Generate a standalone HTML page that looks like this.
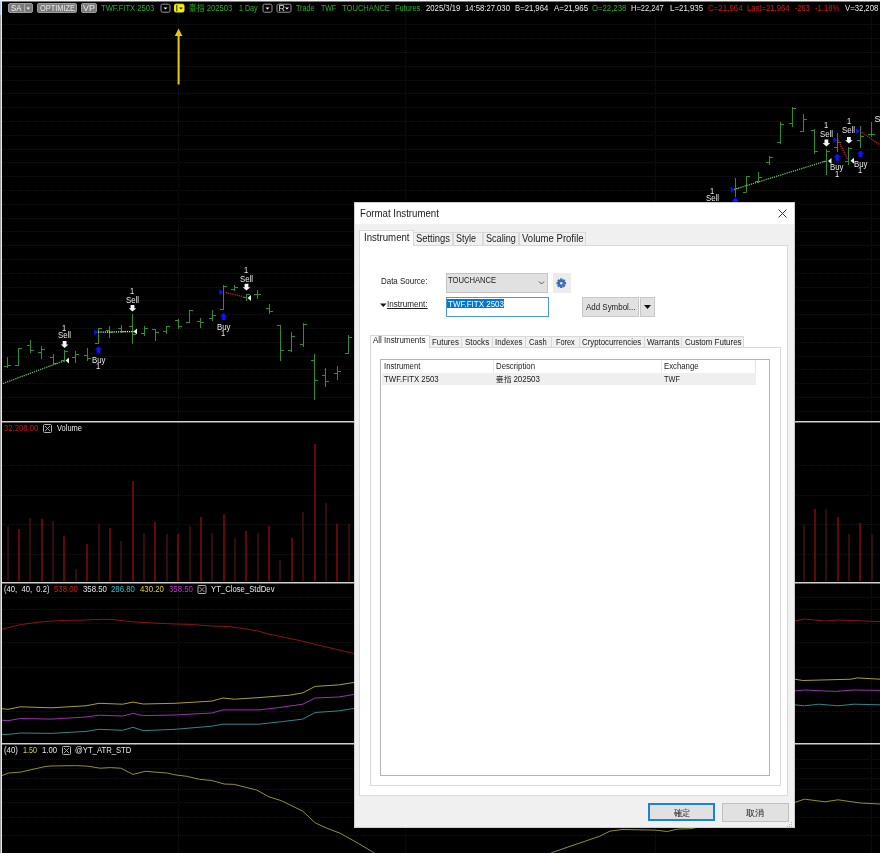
<!DOCTYPE html>
<html><head><meta charset="utf-8"><style>
html,body{margin:0;padding:0;background:#000;width:880px;height:853px;overflow:hidden}
.t{position:absolute;white-space:pre;transform-origin:0 0;font-family:'Liberation Sans', sans-serif}
#root{filter:blur(0.35px);position:relative;width:880px;height:853px;overflow:hidden;background:#000}
</style></head><body><div id="root">
<svg style="position:absolute;left:0;top:0" width="880" height="853" viewBox="0 0 880 853">
<line x1="2" y1="24.5" x2="880" y2="24.5" stroke="#131313" stroke-width="1" stroke-dasharray="1 1"/>
<line x1="2" y1="38.5" x2="880" y2="38.5" stroke="#131313" stroke-width="1" stroke-dasharray="1 1"/>
<line x1="2" y1="52.5" x2="880" y2="52.5" stroke="#131313" stroke-width="1" stroke-dasharray="1 1"/>
<line x1="2" y1="66.5" x2="880" y2="66.5" stroke="#131313" stroke-width="1" stroke-dasharray="1 1"/>
<line x1="2" y1="80.5" x2="880" y2="80.5" stroke="#131313" stroke-width="1" stroke-dasharray="1 1"/>
<line x1="2" y1="93.5" x2="880" y2="93.5" stroke="#131313" stroke-width="1" stroke-dasharray="1 1"/>
<line x1="2" y1="107.5" x2="880" y2="107.5" stroke="#131313" stroke-width="1" stroke-dasharray="1 1"/>
<line x1="2" y1="121.5" x2="880" y2="121.5" stroke="#131313" stroke-width="1" stroke-dasharray="1 1"/>
<line x1="2" y1="135.5" x2="880" y2="135.5" stroke="#131313" stroke-width="1" stroke-dasharray="1 1"/>
<line x1="2" y1="149.5" x2="880" y2="149.5" stroke="#131313" stroke-width="1" stroke-dasharray="1 1"/>
<line x1="2" y1="162.5" x2="880" y2="162.5" stroke="#131313" stroke-width="1" stroke-dasharray="1 1"/>
<line x1="2" y1="176.5" x2="880" y2="176.5" stroke="#131313" stroke-width="1" stroke-dasharray="1 1"/>
<line x1="2" y1="190.5" x2="880" y2="190.5" stroke="#131313" stroke-width="1" stroke-dasharray="1 1"/>
<line x1="2" y1="204.5" x2="880" y2="204.5" stroke="#131313" stroke-width="1" stroke-dasharray="1 1"/>
<line x1="2" y1="218.5" x2="880" y2="218.5" stroke="#131313" stroke-width="1" stroke-dasharray="1 1"/>
<line x1="2" y1="231.5" x2="880" y2="231.5" stroke="#131313" stroke-width="1" stroke-dasharray="1 1"/>
<line x1="2" y1="245.5" x2="880" y2="245.5" stroke="#131313" stroke-width="1" stroke-dasharray="1 1"/>
<line x1="2" y1="259.5" x2="880" y2="259.5" stroke="#131313" stroke-width="1" stroke-dasharray="1 1"/>
<line x1="2" y1="273.5" x2="880" y2="273.5" stroke="#131313" stroke-width="1" stroke-dasharray="1 1"/>
<line x1="2" y1="287.5" x2="880" y2="287.5" stroke="#131313" stroke-width="1" stroke-dasharray="1 1"/>
<line x1="2" y1="300.5" x2="880" y2="300.5" stroke="#131313" stroke-width="1" stroke-dasharray="1 1"/>
<line x1="2" y1="314.5" x2="880" y2="314.5" stroke="#131313" stroke-width="1" stroke-dasharray="1 1"/>
<line x1="2" y1="328.5" x2="880" y2="328.5" stroke="#131313" stroke-width="1" stroke-dasharray="1 1"/>
<line x1="2" y1="342.5" x2="880" y2="342.5" stroke="#131313" stroke-width="1" stroke-dasharray="1 1"/>
<line x1="2" y1="356.5" x2="880" y2="356.5" stroke="#131313" stroke-width="1" stroke-dasharray="1 1"/>
<line x1="2" y1="369.5" x2="880" y2="369.5" stroke="#131313" stroke-width="1" stroke-dasharray="1 1"/>
<line x1="2" y1="383.5" x2="880" y2="383.5" stroke="#131313" stroke-width="1" stroke-dasharray="1 1"/>
<line x1="2" y1="397.5" x2="880" y2="397.5" stroke="#131313" stroke-width="1" stroke-dasharray="1 1"/>
<line x1="2" y1="411.5" x2="880" y2="411.5" stroke="#131313" stroke-width="1" stroke-dasharray="1 1"/>
<line x1="2" y1="465.5" x2="880" y2="465.5" stroke="#131313" stroke-width="1" stroke-dasharray="1 1"/>
<line x1="2" y1="495.5" x2="880" y2="495.5" stroke="#131313" stroke-width="1" stroke-dasharray="1 1"/>
<line x1="2" y1="524.5" x2="880" y2="524.5" stroke="#131313" stroke-width="1" stroke-dasharray="1 1"/>
<line x1="2" y1="554.5" x2="880" y2="554.5" stroke="#131313" stroke-width="1" stroke-dasharray="1 1"/>
<line x1="2" y1="597.5" x2="880" y2="597.5" stroke="#131313" stroke-width="1" stroke-dasharray="1 1"/>
<line x1="2" y1="609.5" x2="880" y2="609.5" stroke="#131313" stroke-width="1" stroke-dasharray="1 1"/>
<line x1="2" y1="623.5" x2="880" y2="623.5" stroke="#131313" stroke-width="1" stroke-dasharray="1 1"/>
<line x1="2" y1="642.5" x2="880" y2="642.5" stroke="#131313" stroke-width="1" stroke-dasharray="1 1"/>
<line x1="2" y1="667.5" x2="880" y2="667.5" stroke="#131313" stroke-width="1" stroke-dasharray="1 1"/>
<line x1="2" y1="711.5" x2="880" y2="711.5" stroke="#131313" stroke-width="1" stroke-dasharray="1 1"/>
<line x1="2" y1="759.5" x2="880" y2="759.5" stroke="#131313" stroke-width="1" stroke-dasharray="1 1"/>
<line x1="2" y1="768.5" x2="880" y2="768.5" stroke="#131313" stroke-width="1" stroke-dasharray="1 1"/>
<line x1="2" y1="778.5" x2="880" y2="778.5" stroke="#131313" stroke-width="1" stroke-dasharray="1 1"/>
<line x1="2" y1="789.5" x2="880" y2="789.5" stroke="#131313" stroke-width="1" stroke-dasharray="1 1"/>
<line x1="2" y1="802.5" x2="880" y2="802.5" stroke="#131313" stroke-width="1" stroke-dasharray="1 1"/>
<line x1="2" y1="817.5" x2="880" y2="817.5" stroke="#131313" stroke-width="1" stroke-dasharray="1 1"/>
<line x1="2" y1="835.5" x2="880" y2="835.5" stroke="#131313" stroke-width="1" stroke-dasharray="1 1"/>
<line x1="178.5" y1="14" x2="178.5" y2="853" stroke="#131313" stroke-width="1" stroke-dasharray="1 1"/>
<line x1="405.5" y1="14" x2="405.5" y2="853" stroke="#131313" stroke-width="1" stroke-dasharray="1 1"/>
<line x1="655.5" y1="14" x2="655.5" y2="853" stroke="#131313" stroke-width="1" stroke-dasharray="1 1"/>
<line x1="871.5" y1="14" x2="871.5" y2="853" stroke="#131313" stroke-width="1" stroke-dasharray="1 1"/>
<path d="M7.5 357V368M4.0 366.5H7.5M7.5 365.5H11.0M18.5 348V366M15.0 365.5H18.5M18.5 348.5H22.0M30.5 340V353M27.0 345.5H30.5M30.5 350.5H34.0M41.5 346V359M38.0 352.5H41.5M41.5 349.5H45.0M53.5 354V364M50.0 357.5H53.5M53.5 363.5H57.0M64.5 350V362M61.0 360.5H64.5M64.5 351.5H68.0M75.5 351V363M72.0 357.5H75.5M75.5 354.5H79.0M87.5 348V361M84.0 355.5H87.5M87.5 358.5H91.0M98.5 328V344M95.0 343.5H98.5M98.5 328.5H102.0M109.5 326V338M106.0 330.5H109.5M109.5 332.5H113.0M121.5 325V333M118.0 328.5H121.5M121.5 331.5H125.0M132.5 314V344M129.0 326.5H132.5M132.5 334.5H136.0M144.5 326V336M141.0 333.5H144.5M144.5 328.5H148.0M155.5 329V341M152.0 329.5H155.5M155.5 332.5H159.0M166.5 326V334M163.0 331.5H166.5M166.5 326.5H170.0M178.5 319V329M175.0 320.5H178.5M178.5 326.5H182.0M189.5 310V323M186.0 322.5H189.5M189.5 310.5H193.0M200.5 318V328M197.0 321.5H200.5M200.5 322.5H204.0M212.5 310V321M209.0 318.5H212.5M212.5 315.5H216.0M223.5 285V310M220.0 309.5H223.5M223.5 286.5H227.0M234.5 285V291M231.0 289.5H234.5M234.5 287.5H238.0M246.5 294V301M243.0 297.5H246.5M246.5 294.5H250.0M257.5 290V299M254.0 294.5H257.5M257.5 294.5H261.0M269.5 304V314M266.0 308.5H269.5M269.5 311.5H273.0M280.5 325V361M277.0 325.5H280.5M280.5 350.5H284.0M291.5 332V352M288.0 350.5H291.5M291.5 336.5H295.0M303.5 323V347M300.0 344.5H303.5M303.5 324.5H307.0M314.5 354V400M311.0 360.5H314.5M314.5 380.5H318.0M325.5 368V387M322.0 375.5H325.5M325.5 381.5H329.0M337.5 366V380M334.0 373.5H337.5M337.5 371.5H341.0M348.5 335V354M345.0 353.5H348.5M348.5 337.5H352.0M735.5 178V197M732.0 189.5H735.5M735.5 188.5H739.0M746.5 176V192M743.0 192.5H746.5M746.5 176.5H750.0M758.5 172V183M755.0 181.5H758.5M758.5 177.5H762.0M769.5 156V165M766.0 162.5H769.5M769.5 157.5H773.0M780.5 122V144M777.0 142.5H780.5M780.5 124.5H784.0M792.5 107V127M789.0 123.5H792.5M792.5 108.5H796.0M803.5 114V132M800.0 131.5H803.5M803.5 119.5H807.0M814.5 129V154M811.0 130.5H814.5M814.5 151.5H818.0M826.5 149V175M823.0 161.5H826.5M826.5 151.5H830.0M837.5 133V152M834.0 147.5H837.5M837.5 142.5H841.0M848.5 147V165M845.0 161.5H848.5M848.5 148.5H852.0M860.5 126V148M857.0 140.5H860.5M860.5 136.5H864.0M871.5 122V137M868.0 134.5H871.5M871.5 134.5H875.0" stroke="#2c902c" stroke-width="1" fill="none"/>
<line x1="3" y1="383.5" x2="64" y2="360.8" stroke="#70c470" stroke-width="1.3" stroke-dasharray="1.2 1"/>
<line x1="96" y1="332.2" x2="134" y2="331.6" stroke="#d0f0d0" stroke-width="1.3" stroke-dasharray="1.2 1"/>
<line x1="226" y1="292.5" x2="246" y2="297.5" stroke="#d02020" stroke-width="1.3" stroke-dasharray="1.2 1"/>
<line x1="734" y1="189.5" x2="826" y2="161" stroke="#70c470" stroke-width="1.3" stroke-dasharray="1.2 1"/>
<line x1="838" y1="140" x2="848" y2="160" stroke="#d02020" stroke-width="1.3" stroke-dasharray="1.2 1"/>
<line x1="860" y1="131" x2="880" y2="145" stroke="#d02020" stroke-width="1.3" stroke-dasharray="1.2 1"/>
<path d="M65.5 360.5L69 357.5V363.5Z" fill="#f0f0f0"/>
<path d="M62.699999999999996 341H66.5V344.5H68.39999999999999L64.6 348L60.8 344.5H62.699999999999996Z" fill="#f4f4f4"/>
<path d="M98.0 332.2L94.3 329.2V335.2Z" fill="#1010ff"/>
<path d="M98.5 346.5L102.3 349.75H100.4V353H96.6V349.75H94.7Z" fill="#1010ff"/>
<path d="M133.5 331.5L137 328.5V334.5Z" fill="#f0f0f0"/>
<path d="M130.6 305H134.4V308.3H136.3L132.5 311.6L128.7 308.3H130.6Z" fill="#f4f4f4"/>
<path d="M223.1 292.2L219.4 289.2V295.2Z" fill="#1010ff"/>
<path d="M223.6 313L227.4 316.5H225.5V320H221.7V316.5H219.79999999999998Z" fill="#1010ff"/>
<path d="M247.5 298L251 295V301Z" fill="#f0f0f0"/>
<path d="M244.6 283.7H248.4V287.15H250.3L246.5 290.6L242.7 287.15H244.6Z" fill="#f4f4f4"/>
<path d="M734.5 189.5L730.8 186.5V192.5Z" fill="#1010ff"/>
<path d="M735.4 197.5L739.1999999999999 201.25H737.3V205H733.5V201.25H731.6Z" fill="#1010ff"/>
<path d="M828.0 161L831.5 158V164Z" fill="#f0f0f0"/>
<path d="M824.5 139.5H828.3V143.05H830.1999999999999L826.4 146.6L822.6 143.05H824.5Z" fill="#f4f4f4"/>
<path d="M837.0 139.9L833.3 136.9V142.9Z" fill="#1010ff"/>
<path d="M837.3 153.7L841.0999999999999 157.25H839.1999999999999V160.8H835.4V157.25H833.5Z" fill="#1010ff"/>
<path d="M850.5 160.8L854 157.8V163.8Z" fill="#f0f0f0"/>
<path d="M847.0 136.9H850.8V140.15H852.6999999999999L848.9 143.4L845.1 140.15H847.0Z" fill="#f4f4f4"/>
<path d="M859.9 131.1L856.1999999999999 128.1V134.1Z" fill="#1010ff"/>
<path d="M860.5 150.4L864.3 153.65H862.4V156.9H858.6V153.65H856.7Z" fill="#1010ff"/>
<path d="M178.6 28.5L182.4 36H179.6V84.5H177.6V36H174.8Z" fill="#e8cc00"/>
<path d="M19 529V581M42 519V581M64 536V581M87 544V581M110 528V581M133 481V581M155 522V581M178 534V581M201 517V581M224 514V581M246 531V581M269 526V581M292 538V581M315 444V581M337 524V581M815 509V581M838 517V581M860 523V581" stroke="#a00c0c" stroke-width="1.25" fill="none"/>
<path d="M8 526V581M30 518V581M53 521V581M76 569V581M99 524V581M121 541V581M144 533V581M167 534V581M190 526V581M212 533V581M235 538V581M258 533V581M280 560V581M303 512V581M326 503V581M349 524V581M804 525V581M826 509V581M849 534V581M872 534V581" stroke="#521414" stroke-width="1.25" fill="none"/>
<polyline points="0,629.7 20.5,624.6 40.9,621.9 61.4,620.5 81.8,620.1 102.3,619.3 112.5,619.5 133,621.9 153.4,623 175,624 189.3,624.4 211.8,626 230.2,626.6 256.8,630.7 269.1,634.2 301.8,641 318.2,645 360,655" stroke="#8c1414" stroke-width="1.0" fill="none" stroke-linejoin="round"/>
<polyline points="790,621.5 794.8,621 804.4,619 825.2,621 838,620 880,621.6" stroke="#8c1414" stroke-width="1.0" fill="none" stroke-linejoin="round"/>
<polyline points="0,708.5 8,709.3 20.5,706.8 51,707.8 86,705.8 99,703.3 122.7,704.2 133,702.1 143.2,704 175,703.3 211.8,701.1 223,698 234.3,699.2 258.9,697.6 289.5,695.2 302.8,692.9 315.1,686.4 338.6,684.9 360,681.5" stroke="#a8a030" stroke-width="1.0" fill="none" stroke-linejoin="round"/>
<polyline points="790,679.5 794.8,679.2 802.8,680.5 850.8,679.2 857.2,677.9 880,679.2" stroke="#a8a030" stroke-width="1.0" fill="none" stroke-linejoin="round"/>
<polyline points="0,720.1 8,720.7 20.5,718.5 51,719.1 86,717 99,715.2 122.7,716 133,713.4 143.2,715.6 175,715 211.8,713 223,709.9 258.9,709.9 277.3,707.8 302.8,704.2 315.1,698 338.6,697 360,693.5" stroke="#a030b0" stroke-width="1.0" fill="none" stroke-linejoin="round"/>
<polyline points="790,691 794.8,691 804.4,690 834.8,691.4 854,690 880,690.4" stroke="#a030b0" stroke-width="1.0" fill="none" stroke-linejoin="round"/>
<polyline points="0,734.4 8,734.4 20.5,733 51,733.4 86,731.4 99,729.3 122.7,730.3 133,727.3 143.2,730.7 175,729.3 211.8,726.2 223,724.2 258.9,724.2 281.4,721.7 302.8,719.1 315.1,712.5 338.6,710.9 360,707.5" stroke="#2a8a90" stroke-width="1.0" fill="none" stroke-linejoin="round"/>
<polyline points="790,704.8 794.8,704.8 804.4,705.8 818.8,704.2 838,705.8 854,704.2 880,704.8" stroke="#2a8a90" stroke-width="1.0" fill="none" stroke-linejoin="round"/>
<polyline points="0,776.4 8.2,773.1 20.5,772.1 45,766.6 51,766 75.7,765.6 88,766.2 100.2,768.2 110.5,767.6 120.7,768.2 133,774.4 145.2,771.3 167.7,773.1 175,774.8 187.3,776.4 199.5,779.3 211.8,780.5 224.1,784 234.3,784.4 256.8,790.1 269.1,796.9 281.4,800.7 302.8,811.2 315.1,822.8 326.4,828 340,833.2 358.4,843.4 373.7,852.6 380,858 545,858 551.7,852.6 599.8,836.2 610,831.1 622.3,829.5 655,830.1 667.3,831.5 677.5,829.1 689.8,828.7 700,827 750,815 794.8,802.4 804.4,799.2 825.2,801.8 838,799.8 860.4,803 880,804" stroke="#948e36" stroke-width="1.0" fill="none" stroke-linejoin="round"/>
<rect x="0" y="0" width="880" height="1" fill="#f4f4f4"/>
<rect x="0" y="1" width="880" height="1" fill="#7a7a7a"/>
<rect x="1" y="0" width="1" height="853" fill="#e8e8e8"/>
<rect x="0" y="1" width="1" height="14" fill="#b8cce4"/>
<rect x="0" y="15" width="1" height="838" fill="#a0a0a0"/>
<rect x="2" y="421" width="878" height="1.5" fill="#d0d0d0"/>
<rect x="2" y="582" width="878" height="1.5" fill="#d0d0d0"/>
<rect x="2" y="743" width="878" height="1.5" fill="#d0d0d0"/>
<rect x="8.5" y="3.5" width="24" height="9" rx="1.5" fill="#7c7c7c" stroke="#9a9a9a" stroke-width="1"/>
<rect x="24" y="4" width="1" height="8" fill="#a8a8a8"/>
<path d="M26.5 7.5H30L28.25 9.5Z" fill="#fff"/>
<rect x="37.5" y="3.5" width="39" height="9" rx="1.5" fill="#7c7c7c" stroke="#9a9a9a" stroke-width="1"/>
<rect x="81.5" y="3.5" width="15" height="9" rx="1.5" fill="#7c7c7c" stroke="#9a9a9a" stroke-width="1"/>
<rect x="161.0" y="4.2" width="9.0" height="8.0" rx="1.5" fill="#000" stroke="#9a9a9a" stroke-width="1"/>
<path d="M163.5 7.5H167.5L165.5 9.5Z" fill="#fff"/>
<rect x="174.5" y="4.2" width="9.5" height="7.800000000000001" rx="1.5" fill="#f4f000" stroke="#f4f000" stroke-width="1"/>
<rect x="176.2" y="5" width="1.2" height="6.5" fill="#444"/><path d="M179 7.5H183L181 9.5Z" fill="#222"/>
<rect x="263.0" y="4.2" width="9.0" height="8.0" rx="1.5" fill="#000" stroke="#9a9a9a" stroke-width="1"/>
<path d="M265.5 7.5H269.5L267.5 9.5Z" fill="#fff"/>
<rect x="277.0" y="4.2" width="14.0" height="8.0" rx="1.5" fill="#000" stroke="#9a9a9a" stroke-width="1"/>
<path d="M285 7.5H289L287 9.5Z" fill="#fff"/>
<rect x="43.5" y="424.5" width="8" height="8" rx="1" fill="#000" stroke="#b0b0b0" stroke-width="1"/>
<path d="M45 426L50 431M50 426L45 431" stroke="#c0c0c0" stroke-width="0.8"/>
<rect x="198.0" y="585.5" width="8.0" height="8" rx="1" fill="#000" stroke="#b0b0b0" stroke-width="1"/>
<path d="M199.5 587L204.5 592M204.5 587L199.5 592" stroke="#c0c0c0" stroke-width="0.8"/>
<rect x="62.5" y="746.5" width="8" height="8" rx="1" fill="#000" stroke="#b0b0b0" stroke-width="1"/>
<path d="M64 748L69 753M69 748L64 753" stroke="#c0c0c0" stroke-width="0.8"/>
</svg>

<div class="t" style="left:62.42px;top:324.00px;font-size:8.6px;line-height:8.6px;color:#e8e8e8;font-weight:normal;transform:scaleX(0.870);">1</div>
<div class="t" style="left:58.07px;top:331.00px;font-size:9px;line-height:9px;color:#e8e8e8;font-weight:normal;transform:scaleX(0.870);">Sell</div>
<div class="t" style="left:91.54px;top:356.00px;font-size:9px;line-height:9px;color:#e8e8e8;font-weight:normal;transform:scaleX(0.870);">Buy</div>
<div class="t" style="left:96.33px;top:362.00px;font-size:8.6px;line-height:8.6px;color:#e8e8e8;font-weight:normal;transform:scaleX(0.870);">1</div>
<div class="t" style="left:130.32px;top:287.00px;font-size:8.6px;line-height:8.6px;color:#e8e8e8;font-weight:normal;transform:scaleX(0.870);">1</div>
<div class="t" style="left:125.97px;top:296.00px;font-size:9px;line-height:9px;color:#e8e8e8;font-weight:normal;transform:scaleX(0.870);">Sell</div>
<div class="t" style="left:216.64px;top:323.00px;font-size:9px;line-height:9px;color:#e8e8e8;font-weight:normal;transform:scaleX(0.870);">Buy</div>
<div class="t" style="left:221.42px;top:329.00px;font-size:8.6px;line-height:8.6px;color:#e8e8e8;font-weight:normal;transform:scaleX(0.870);">1</div>
<div class="t" style="left:244.32px;top:266.00px;font-size:8.6px;line-height:8.6px;color:#e8e8e8;font-weight:normal;transform:scaleX(0.870);">1</div>
<div class="t" style="left:239.97px;top:275.00px;font-size:9px;line-height:9px;color:#e8e8e8;font-weight:normal;transform:scaleX(0.870);">Sell</div>
<div class="t" style="left:710.43px;top:187.00px;font-size:8.6px;line-height:8.6px;color:#e8e8e8;font-weight:normal;transform:scaleX(0.870);">1</div>
<div class="t" style="left:706.07px;top:194.00px;font-size:9px;line-height:9px;color:#e8e8e8;font-weight:normal;transform:scaleX(0.870);">Sell</div>
<div class="t" style="left:824.23px;top:121.00px;font-size:8.6px;line-height:8.6px;color:#e8e8e8;font-weight:normal;transform:scaleX(0.870);">1</div>
<div class="t" style="left:819.87px;top:130.00px;font-size:9px;line-height:9px;color:#e8e8e8;font-weight:normal;transform:scaleX(0.870);">Sell</div>
<div class="t" style="left:830.34px;top:163.00px;font-size:9px;line-height:9px;color:#e8e8e8;font-weight:normal;transform:scaleX(0.870);">Buy</div>
<div class="t" style="left:835.12px;top:170.00px;font-size:8.6px;line-height:8.6px;color:#e8e8e8;font-weight:normal;transform:scaleX(0.870);">1</div>
<div class="t" style="left:846.73px;top:117.00px;font-size:8.6px;line-height:8.6px;color:#e8e8e8;font-weight:normal;transform:scaleX(0.870);">1</div>
<div class="t" style="left:842.37px;top:126.00px;font-size:9px;line-height:9px;color:#e8e8e8;font-weight:normal;transform:scaleX(0.870);">Sell</div>
<div class="t" style="left:853.54px;top:160.00px;font-size:9px;line-height:9px;color:#e8e8e8;font-weight:normal;transform:scaleX(0.870);">Buy</div>
<div class="t" style="left:858.33px;top:166.00px;font-size:8.6px;line-height:8.6px;color:#e8e8e8;font-weight:normal;transform:scaleX(0.870);">1</div>
<div class="t" style="left:874.50px;top:115.00px;font-size:9px;line-height:9px;color:#e8e8e8;font-weight:normal;transform:scaleX(1.000);">S</div>
<div class="t" style="left:11.00px;top:4.00px;font-size:8.9px;line-height:8.9px;color:#f0f0f0;font-weight:normal;transform:scaleX(0.881);">SA</div>
<div class="t" style="left:39.50px;top:4.00px;font-size:8.9px;line-height:8.9px;color:#e8e8e8;font-weight:normal;transform:scaleX(0.834);">OPTIMIZE</div>
<div class="t" style="left:83.00px;top:4.00px;font-size:8.9px;line-height:8.9px;color:#e8e8e8;font-weight:normal;transform:scaleX(1.007);">VP</div>
<div class="t" style="left:101.40px;top:4.00px;font-size:8.9px;line-height:8.9px;color:#22b422;font-weight:normal;transform:scaleX(0.855);">TWF.FITX 2503</div>
<div class="t" style="left:188.60px;top:4.00px;font-size:8.9px;line-height:8.9px;color:#22b422;font-weight:normal;transform:scaleX(0.865);">臺指 202503</div>
<div class="t" style="left:238.60px;top:4.00px;font-size:8.9px;line-height:8.9px;color:#22b422;font-weight:normal;transform:scaleX(0.804);">1 Day</div>
<div class="t" style="left:278.50px;top:4.00px;font-size:8.9px;line-height:8.9px;color:#e8e8e8;font-weight:normal;transform:scaleX(1.000);">R</div>
<div class="t" style="left:296.00px;top:4.00px;font-size:8.9px;line-height:8.9px;color:#22b422;font-weight:normal;transform:scaleX(0.807);">Trade</div>
<div class="t" style="left:320.50px;top:4.00px;font-size:8.9px;line-height:8.9px;color:#22b422;font-weight:normal;transform:scaleX(0.783);">TWF</div>
<div class="t" style="left:341.80px;top:4.00px;font-size:8.9px;line-height:8.9px;color:#22b422;font-weight:normal;transform:scaleX(0.855);">TOUCHANCE</div>
<div class="t" style="left:394.80px;top:4.00px;font-size:8.9px;line-height:8.9px;color:#22b422;font-weight:normal;transform:scaleX(0.839);">Futures</div>
<div class="t" style="left:425.50px;top:4.00px;font-size:8.9px;line-height:8.9px;color:#e8e8e8;font-weight:normal;transform:scaleX(0.872);">2025/3/19</div>
<div class="t" style="left:465.00px;top:4.00px;font-size:8.9px;line-height:8.9px;color:#e8e8e8;font-weight:normal;transform:scaleX(0.867);">14:58:27.030</div>
<div class="t" style="left:515.40px;top:4.00px;font-size:8.9px;line-height:8.9px;color:#e8e8e8;font-weight:normal;transform:scaleX(0.869);">B=21,964</div>
<div class="t" style="left:553.60px;top:4.00px;font-size:8.9px;line-height:8.9px;color:#e8e8e8;font-weight:normal;transform:scaleX(0.890);">A=21,965</div>
<div class="t" style="left:592.40px;top:4.00px;font-size:8.9px;line-height:8.9px;color:#22b422;font-weight:normal;transform:scaleX(0.873);">O=22,238</div>
<div class="t" style="left:631.00px;top:4.00px;font-size:8.9px;line-height:8.9px;color:#e8e8e8;font-weight:normal;transform:scaleX(0.843);">H=22,247</div>
<div class="t" style="left:669.50px;top:4.00px;font-size:8.9px;line-height:8.9px;color:#e8e8e8;font-weight:normal;transform:scaleX(0.889);">L=21,935</div>
<div class="t" style="left:707.60px;top:4.00px;font-size:8.9px;line-height:8.9px;color:#d81818;font-weight:normal;transform:scaleX(0.894);">C=21,964</div>
<div class="t" style="left:746.90px;top:4.00px;font-size:8.9px;line-height:8.9px;color:#d81818;font-weight:normal;transform:scaleX(0.864);">Last=21,964</div>
<div class="t" style="left:794.90px;top:4.00px;font-size:8.9px;line-height:8.9px;color:#d81818;font-weight:normal;transform:scaleX(0.825);">-263</div>
<div class="t" style="left:814.50px;top:4.00px;font-size:8.9px;line-height:8.9px;color:#d81818;font-weight:normal;transform:scaleX(0.868);">-1.18%</div>
<div class="t" style="left:844.50px;top:4.00px;font-size:8.9px;line-height:8.9px;color:#e8e8e8;font-weight:normal;transform:scaleX(0.869);">V=32,208</div>
<div class="t" style="left:4.00px;top:424.00px;font-size:8.9px;line-height:8.9px;color:#c81414;font-weight:normal;transform:scaleX(0.872);">32,208.00</div>
<div class="t" style="left:57.00px;top:424.00px;font-size:8.9px;line-height:8.9px;color:#e8e8e8;font-weight:normal;transform:scaleX(0.843);">Volume</div>
<div class="t" style="left:4.00px;top:585.00px;font-size:8.9px;line-height:8.9px;color:#e8e8e8;font-weight:normal;transform:scaleX(0.861);">(40,  40,  0.2)</div>
<div class="t" style="left:54.00px;top:585.00px;font-size:8.9px;line-height:8.9px;color:#d01818;font-weight:normal;transform:scaleX(0.882);">538.00</div>
<div class="t" style="left:83.00px;top:585.00px;font-size:8.9px;line-height:8.9px;color:#e8e8e8;font-weight:normal;transform:scaleX(0.882);">358.50</div>
<div class="t" style="left:111.00px;top:585.00px;font-size:8.9px;line-height:8.9px;color:#30c0c8;font-weight:normal;transform:scaleX(0.882);">286.80</div>
<div class="t" style="left:140.00px;top:585.00px;font-size:8.9px;line-height:8.9px;color:#d8d040;font-weight:normal;transform:scaleX(0.882);">430.20</div>
<div class="t" style="left:169.00px;top:585.00px;font-size:8.9px;line-height:8.9px;color:#c030d0;font-weight:normal;transform:scaleX(0.882);">358.50</div>
<div class="t" style="left:210.80px;top:585.00px;font-size:8.9px;line-height:8.9px;color:#e8e8e8;font-weight:normal;transform:scaleX(0.870);">YT_Close_StdDev</div>
<div class="t" style="left:4.00px;top:746.00px;font-size:8.9px;line-height:8.9px;color:#e8e8e8;font-weight:normal;transform:scaleX(0.885);">(40)</div>
<div class="t" style="left:23.00px;top:746.00px;font-size:8.9px;line-height:8.9px;color:#d8d040;font-weight:normal;transform:scaleX(0.807);">1.50</div>
<div class="t" style="left:42.00px;top:746.00px;font-size:8.9px;line-height:8.9px;color:#e8e8e8;font-weight:normal;transform:scaleX(0.865);">1.00</div>
<div class="t" style="left:75.00px;top:746.00px;font-size:8.9px;line-height:8.9px;color:#e8e8e8;font-weight:normal;transform:scaleX(0.866);">@YT_ATR_STD</div>
<div style="position:absolute;left:354px;top:202px;width:441px;height:626px;background:#f0f0f0;border:1px solid #cfcfcf;box-sizing:border-box;"></div>
<div style="position:absolute;left:355px;top:203px;width:439px;height:21px;background:#ffffff;box-sizing:border-box;"></div>
<svg style="position:absolute;left:0;top:0" width="880" height="853"><path d="M778.5 209.5L786.5 217.5M786.5 209.5L778.5 217.5" stroke="#333" stroke-width="1"/></svg>
<div style="position:absolute;left:359px;top:245px;width:429px;height:551px;background:#ffffff;border:1px solid #d9d9d9;box-sizing:border-box;"></div>
<div style="position:absolute;left:413px;top:231.5px;width:40px;height:14.5px;background:#f0f0f0;border:1px solid #d9d9d9;box-sizing:border-box;"></div>
<div style="position:absolute;left:453px;top:231.5px;width:29.5px;height:14.5px;background:#f0f0f0;border:1px solid #d9d9d9;box-sizing:border-box;"></div>
<div style="position:absolute;left:482.5px;top:231.5px;width:36.5px;height:14.5px;background:#f0f0f0;border:1px solid #d9d9d9;box-sizing:border-box;"></div>
<div style="position:absolute;left:519px;top:231.5px;width:67px;height:14.5px;background:#f0f0f0;border:1px solid #d9d9d9;box-sizing:border-box;"></div>
<div style="position:absolute;left:359px;top:230px;width:55px;height:16px;background:#ffffff;border:1px solid #d9d9d9;box-sizing:border-box;border-bottom:none;"></div>
<div style="position:absolute;left:446px;top:273px;width:102px;height:20px;background:#e1e1e1;border:1px solid #c4c4c4;box-sizing:border-box;"></div>
<div style="position:absolute;left:552.5px;top:273px;width:18.0px;height:20px;background:#ececec;box-sizing:border-box;"></div>
<svg style="position:absolute;left:0;top:0" width="880" height="853"><path d="M539 281.5L541.5 284L544 281.5" stroke="#555" stroke-width="1" fill="none"/><path d="M539 305.5L541.5 308L544 305.5" stroke="#555" stroke-width="1" fill="none"/><g transform="translate(561.3 283.2)" fill="#3a6db4"><rect x="-1.2" y="-4.8" width="2.4" height="9.6" transform="rotate(0)"/><rect x="-1.2" y="-4.8" width="2.4" height="9.6" transform="rotate(45)"/><rect x="-1.2" y="-4.8" width="2.4" height="9.6" transform="rotate(90)"/><rect x="-1.2" y="-4.8" width="2.4" height="9.6" transform="rotate(135)"/><circle r="3.2"/><circle r="1.2" fill="#ececec"/></g><path d="M380 303.5H386.5L383.25 307Z" fill="#111"/></svg>
<div style="position:absolute;left:446px;top:297px;width:102.5px;height:20px;background:#ffffff;border:1px solid #4a9ad8;box-sizing:border-box;"></div>
<div style="position:absolute;left:447px;top:299px;width:57px;height:9px;background:#0078d7;box-sizing:border-box;"></div>
<div style="position:absolute;left:582px;top:297px;width:57px;height:19.5px;background:#e1e1e1;border:1px solid #c8c8c8;box-sizing:border-box;"></div>
<div style="position:absolute;left:640px;top:297px;width:14.5px;height:19.5px;background:#e1e1e1;border:1px solid #c8c8c8;box-sizing:border-box;"></div>
<svg style="position:absolute;left:0;top:0" width="880" height="853"><path d="M644 305H651L647.5 309Z" fill="#111"/></svg>
<div style="position:absolute;left:369.5px;top:347px;width:411.0px;height:439px;background:#ffffff;border:1px solid #d9d9d9;box-sizing:border-box;"></div>
<div style="position:absolute;left:429px;top:335.5px;width:33.39999999999998px;height:12.5px;background:#f0f0f0;border:1px solid #d9d9d9;box-sizing:border-box;"></div>
<div style="position:absolute;left:461.4px;top:335.5px;width:31.5px;height:12.5px;background:#f0f0f0;border:1px solid #d9d9d9;box-sizing:border-box;"></div>
<div style="position:absolute;left:491.9px;top:335.5px;width:34.10000000000002px;height:12.5px;background:#f0f0f0;border:1px solid #d9d9d9;box-sizing:border-box;"></div>
<div style="position:absolute;left:525px;top:335.5px;width:27.399999999999977px;height:12.5px;background:#f0f0f0;border:1px solid #d9d9d9;box-sizing:border-box;"></div>
<div style="position:absolute;left:551.4px;top:335.5px;width:28.800000000000068px;height:12.5px;background:#f0f0f0;border:1px solid #d9d9d9;box-sizing:border-box;"></div>
<div style="position:absolute;left:579.2px;top:335.5px;width:65.39999999999998px;height:12.5px;background:#f0f0f0;border:1px solid #d9d9d9;box-sizing:border-box;"></div>
<div style="position:absolute;left:643.6px;top:335.5px;width:38.799999999999955px;height:12.5px;background:#f0f0f0;border:1px solid #d9d9d9;box-sizing:border-box;"></div>
<div style="position:absolute;left:681.4px;top:335.5px;width:62.30000000000007px;height:12.5px;background:#f0f0f0;border:1px solid #d9d9d9;box-sizing:border-box;"></div>
<div style="position:absolute;left:369.5px;top:334.5px;width:60.5px;height:13.5px;background:#ffffff;border:1px solid #d9d9d9;box-sizing:border-box;border-bottom:none;"></div>
<div style="position:absolute;left:379.5px;top:358.5px;width:390.5px;height:417.5px;background:#ffffff;border:1px solid #b4b4b4;box-sizing:border-box;"></div>
<div style="position:absolute;left:492.5px;top:360px;width:1.0px;height:12.5px;background:#e5e5e5;box-sizing:border-box;"></div>
<div style="position:absolute;left:660.5px;top:360px;width:1.0px;height:12.5px;background:#e5e5e5;box-sizing:border-box;"></div>
<div style="position:absolute;left:755px;top:360px;width:1px;height:12.5px;background:#e5e5e5;box-sizing:border-box;"></div>
<div style="position:absolute;left:382px;top:373px;width:373.5px;height:11.5px;background:#efefef;box-sizing:border-box;"></div>
<div style="position:absolute;left:648px;top:802.5px;width:67px;height:18.5px;background:#e1e1e1;border:2px solid #1a84d8;box-sizing:border-box;"></div>
<div style="position:absolute;left:722px;top:802.5px;width:67px;height:19.0px;background:#e1e1e1;border:1px solid #c0c0c0;box-sizing:border-box;"></div>
<svg style="position:absolute;left:0;top:0" width="880" height="853"><g fill="#b0b0b0"><rect x="791" y="822" width="1" height="1"/><rect x="789" y="824" width="1" height="1"/><rect x="791" y="824" width="1" height="1"/><rect x="787" y="826" width="1" height="1"/><rect x="789" y="826" width="1" height="1"/><rect x="791" y="826" width="1" height="1"/></g></svg>
<div class="t" style="left:359.50px;top:208.00px;font-size:10.75px;line-height:10.75px;color:#1a1a1a;font-weight:normal;transform:scaleX(0.898);">Format Instrument</div>
<div class="t" style="left:416.00px;top:234.00px;font-size:10px;line-height:10px;color:#1a1a1a;font-weight:normal;transform:scaleX(0.941);">Settings</div>
<div class="t" style="left:455.70px;top:234.00px;font-size:10px;line-height:10px;color:#1a1a1a;font-weight:normal;transform:scaleX(0.895);">Style</div>
<div class="t" style="left:485.70px;top:234.00px;font-size:10px;line-height:10px;color:#1a1a1a;font-weight:normal;transform:scaleX(0.909);">Scaling</div>
<div class="t" style="left:521.60px;top:234.00px;font-size:10px;line-height:10px;color:#1a1a1a;font-weight:normal;transform:scaleX(0.955);">Volume Profile</div>
<div class="t" style="left:363.75px;top:233.00px;font-size:10px;line-height:10px;color:#1a1a1a;font-weight:normal;transform:scaleX(0.964);">Instrument</div>
<div class="t" style="left:380.70px;top:277.00px;font-size:9.2px;line-height:9.2px;color:#1a1a1a;font-weight:normal;transform:scaleX(0.865);">Data Source:</div>
<div class="t" style="left:448.30px;top:276.00px;font-size:9px;line-height:9px;color:#1a1a1a;font-weight:normal;transform:scaleX(0.848);">TOUCHANCE</div>
<div class="t" style="left:387.20px;top:300.00px;font-size:9.2px;line-height:9.2px;color:#1a1a1a;font-weight:normal;transform:scaleX(0.883);text-decoration:underline;">Instrument:</div>
<div class="t" style="left:447.50px;top:300.00px;font-size:9px;line-height:9px;color:#ffffff;font-weight:normal;transform:scaleX(0.889);">TWF.FITX 2503</div>
<div class="t" style="left:585.50px;top:303.00px;font-size:9.2px;line-height:9.2px;color:#1a1a1a;font-weight:normal;transform:scaleX(0.865);">Add Symbol...</div>
<div class="t" style="left:431.90px;top:338.00px;font-size:8.4px;line-height:8.4px;color:#1a1a1a;font-weight:normal;transform:scaleX(0.947);">Futures</div>
<div class="t" style="left:464.60px;top:338.00px;font-size:8.4px;line-height:8.4px;color:#1a1a1a;font-weight:normal;transform:scaleX(0.962);">Stocks</div>
<div class="t" style="left:495.00px;top:338.00px;font-size:8.4px;line-height:8.4px;color:#1a1a1a;font-weight:normal;transform:scaleX(0.937);">Indexes</div>
<div class="t" style="left:528.60px;top:338.00px;font-size:8.4px;line-height:8.4px;color:#1a1a1a;font-weight:normal;transform:scaleX(0.900);">Cash</div>
<div class="t" style="left:555.50px;top:338.00px;font-size:8.4px;line-height:8.4px;color:#1a1a1a;font-weight:normal;transform:scaleX(0.878);">Forex</div>
<div class="t" style="left:581.80px;top:338.00px;font-size:8.4px;line-height:8.4px;color:#1a1a1a;font-weight:normal;transform:scaleX(0.936);">Cryptocurrencies</div>
<div class="t" style="left:646.60px;top:338.00px;font-size:8.4px;line-height:8.4px;color:#1a1a1a;font-weight:normal;transform:scaleX(0.971);">Warrants</div>
<div class="t" style="left:684.50px;top:338.00px;font-size:8.4px;line-height:8.4px;color:#1a1a1a;font-weight:normal;transform:scaleX(0.950);">Custom Futures</div>
<div class="t" style="left:373.20px;top:336.00px;font-size:8.4px;line-height:8.4px;color:#1a1a1a;font-weight:normal;transform:scaleX(0.947);">All Instruments</div>
<div class="t" style="left:383.60px;top:362.00px;font-size:8.4px;line-height:8.4px;color:#1a1a1a;font-weight:normal;transform:scaleX(0.917);">Instrument</div>
<div class="t" style="left:495.50px;top:362.00px;font-size:8.4px;line-height:8.4px;color:#1a1a1a;font-weight:normal;transform:scaleX(0.931);">Description</div>
<div class="t" style="left:664.20px;top:362.00px;font-size:8.4px;line-height:8.4px;color:#1a1a1a;font-weight:normal;transform:scaleX(0.928);">Exchange</div>
<div class="t" style="left:383.60px;top:375.00px;font-size:8.4px;line-height:8.4px;color:#1a1a1a;font-weight:normal;transform:scaleX(0.933);">TWF.FITX 2503</div>
<div class="t" style="left:495.50px;top:375.00px;font-size:8.4px;line-height:8.4px;color:#1a1a1a;font-weight:normal;transform:scaleX(0.950);">臺指 202503</div>
<div class="t" style="left:664.20px;top:375.00px;font-size:8.4px;line-height:8.4px;color:#1a1a1a;font-weight:normal;transform:scaleX(0.877);">TWF</div>
<div class="t" style="left:673.61px;top:809.00px;font-size:9px;line-height:9px;color:#1a1a1a;font-weight:normal;transform:scaleX(0.911);">確定</div>
<div class="t" style="left:746.40px;top:809.00px;font-size:9px;line-height:9px;color:#1a1a1a;font-weight:normal;transform:scaleX(1.006);">取消</div>
</div></body></html>
